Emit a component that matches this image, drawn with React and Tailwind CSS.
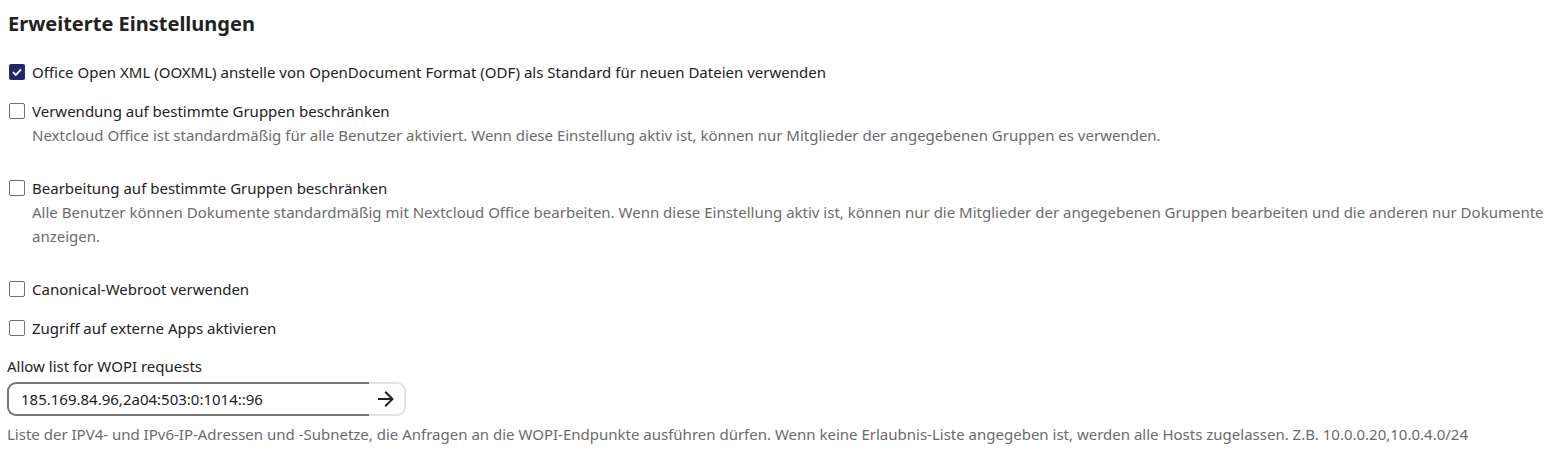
const font = { fontFamily: '"Noto Sans", "Open Sans", sans-serif' };

function Checkbox({ checked, label }) {
  return (
    <label className="flex h-6 items-center text-[15px] leading-6 text-[#222]">
      <span
        className={
          checked
            ? "mr-[7px] ml-[9px] flex h-[16px] w-[16px] items-center justify-center rounded-[2px] bg-[#202a6b]"
            : "mr-[7px] ml-[9px] h-[16px] w-[16px] rounded-[2px] border border-[#707070] bg-white"
        }
      >
        {checked && (
          <svg viewBox="0 0 12 12" className="h-[12px] w-[12px]">
            <path d="M2 6.2 L4.8 9 L10 3.4" fill="none" stroke="white" strokeWidth="1.8" />
          </svg>
        )}
      </span>
      {label}
    </label>
  );
}

function Description({ children }) {
  return <p className="pl-[32px] text-[15px] leading-6 text-[#6b6b6b]">{children}</p>;
}

export default function App() {
  return (
    <div className="min-h-screen bg-white" style={font}>
      <h2 className="px-[8px] pt-[11px] text-[20px] font-bold leading-[26px] text-[#222]">Erweiterte Einstellungen</h2>

      <div className="mt-[23px]">
        <Checkbox checked label="Office Open XML (OOXML) anstelle von OpenDocument Format (ODF) als Standard für neuen Dateien verwenden" />
      </div>

      <div className="mt-[15px]">
        <Checkbox label="Verwendung auf bestimmte Gruppen beschränken" />
        <Description>
          Nextcloud Office ist standardmäßig für alle Benutzer aktiviert. Wenn diese Einstellung aktiv ist, können nur Mitglieder der angegebenen Gruppen es verwenden.
        </Description>
      </div>

      <div className="mt-[29px]">
        <Checkbox label="Bearbeitung auf bestimmte Gruppen beschränken" />
        <Description>
          Alle Benutzer können Dokumente standardmäßig mit Nextcloud Office bearbeiten. Wenn diese Einstellung aktiv ist, können nur die Mitglieder der angegebenen Gruppen bearbeiten und die anderen nur Dokumente anzeigen.
        </Description>
      </div>

      <div className="mt-[29px]">
        <Checkbox label="Canonical-Webroot verwenden" />
      </div>

      <div className="mt-[15px]">
        <Checkbox label="Zugriff auf externe Apps aktivieren" />
      </div>

      <div className="mt-[14px] px-[7px]">
        <p className="text-[15px] leading-6 text-[#222]">Allow list for WOPI requests</p>
        <div className="mt-[4px] flex h-[34px] w-[399px]">
          <input
            readOnly
            value="185.169.84.96,2a04:503:0:1014::96"
            className="h-full flex-1 rounded-l-[9px] border-2 border-r-0 border-[#767676] bg-white pl-[12px] text-[15px] text-[#222] outline-none"
            style={font}
          />
          <button className="flex h-full w-[37px] items-center justify-center rounded-r-[9px] border-2 border-l-0 border-[#e2e2e2] bg-white pr-[2px] text-[#222]">
            <svg viewBox="0 0 24 24" className="h-[24px] w-[24px]" fill="currentColor">
              <path d="M4,11V13H16L10.5,18.5L11.92,19.92L19.84,12L11.92,4.08L10.5,5.5L16,11H4Z" />
            </svg>
          </button>
        </div>
        <p className="mt-[6px] text-[15px] leading-6 text-[#6b6b6b]">
          Liste der IPV4- und IPv6-IP-Adressen und -Subnetze, die Anfragen an die WOPI-Endpunkte ausführen dürfen. Wenn keine Erlaubnis-Liste angegeben ist, werden alle Hosts zugelassen. Z.B. 10.0.0.20,10.0.4.0/24
        </p>
      </div>
    </div>
  );
}
